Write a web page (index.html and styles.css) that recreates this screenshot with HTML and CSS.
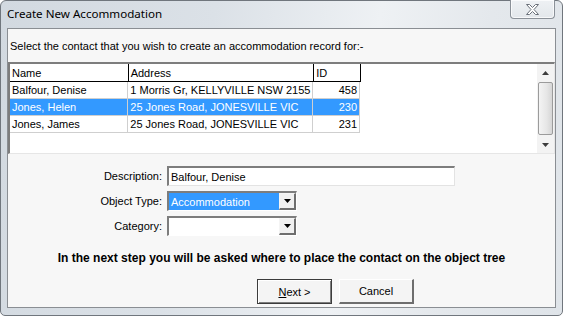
FILE: index.html
```html
<!DOCTYPE html>
<html>
<head>
<meta charset="utf-8">
<link rel="stylesheet" href="styles.css">
</head>
<body>
<div class="window">
  <div class="titlebar">
    <span class="title">Create New Accommodation</span>
    <div class="close">
      <svg width="13" height="11" viewBox="0 0 13 11"><polygon points="0.5,0.5 3.5,0.5 6.5,3.5 9.5,0.5 12.5,0.5 8,5.5 12.5,10.5 9.5,10.5 6.5,7.5 3.5,10.5 0.5,10.5 5,5.5" fill="#ffffff" stroke="#6a7079" stroke-width="1" stroke-linejoin="round"/></svg>
    </div>
  </div>
  <div class="client">
    <div class="prompt">Select the contact that you wish to create an accommodation record for:-</div>
    <div class="grid">
      <div class="table">
        <div class="row head">
          <div class="cell c1">Name</div>
          <div class="cell c2">Address</div>
          <div class="cell c3">ID</div>
        </div>
        <div class="row">
          <div class="cell c1">Balfour, Denise</div>
          <div class="cell c2">1 Morris Gr, KELLYVILLE NSW 2155</div>
          <div class="cell c3 num">458</div>
        </div>
        <div class="row sel">
          <div class="cell c1">Jones, Helen</div>
          <div class="cell c2">25 Jones Road, JONESVILLE VIC</div>
          <div class="cell c3 num">230</div>
        </div>
        <div class="row">
          <div class="cell c1">Jones, James</div>
          <div class="cell c2">25 Jones Road, JONESVILLE VIC</div>
          <div class="cell c3 num">231</div>
        </div>
      </div>
      <div class="vscroll">
        <div class="sarrow"><svg width="7" height="4" viewBox="0 0 7 4"><polygon points="3.5,0 7,4 0,4" fill="#3c3c3c"/></svg></div>
        <div class="thumb"></div>
        <div class="sarrow"><svg width="7" height="4" viewBox="0 0 7 4"><polygon points="0,0 7,0 3.5,4" fill="#3c3c3c"/></svg></div>
      </div>
    </div>
    <div class="form">
      <label class="lbl">Description:</label>
      <div class="textbox">Balfour, Denise</div>
      <label class="lbl">Object Type:</label>
      <div class="combo"><span class="value selected">Accommodation</span><span class="dbtn"><svg width="7" height="4" viewBox="0 0 7 4"><polygon points="0,0 7,0 3.5,4" fill="#000"/></svg></span></div>
      <label class="lbl">Category:</label>
      <div class="combo"><span class="value"></span><span class="dbtn"><svg width="7" height="4" viewBox="0 0 7 4"><polygon points="0,0 7,0 3.5,4" fill="#000"/></svg></span></div>
    </div>
    <div class="note">In the next step you will be asked where to place the contact on the object tree</div>
    <div class="buttons">
      <button class="btn default"><u>N</u>ext &gt;</button>
      <button class="btn">Cancel</button>
    </div>
  </div>
</div>
</body>
</html>
```
FILE: styles.css
```css
html, body {
  margin: 0;
  padding: 0;
  background: #ffffff;
}
.window {
  width: 563px;
  height: 316px;
  box-sizing: border-box;
  border: 1px solid #70767d;
  border-radius: 6px 6px 5px 5px;
  background: linear-gradient(100deg, #d2d9e0 0%, #dbe1e7 35%, #eef1f4 62%, #e4e8ec 80%, #dfe4e9 100%);
  display: flex;
  flex-direction: column;
  font-family: "Liberation Sans", Arial, sans-serif;
  font-size: 11px;
  color: #000;
}
.titlebar {
  height: 27px;
  display: flex;
  align-items: flex-start;
  padding-left: 6px;
}
.title {
  font-family: "Noto Sans", "Liberation Sans", sans-serif;
  font-size: 11.6px;
  color: #000;
  margin-top: 5px;
}
.close {
  margin-left: auto;
  margin-right: 7px;
  margin-top: -1px;
  width: 45px;
  height: 19px;
  box-sizing: border-box;
  border: 1px solid #8b9198;
  border-top: none;
  border-radius: 0 0 4px 4px;
  background: linear-gradient(#eef1f4, #e3e7eb);
  box-shadow: inset 0 0 0 1px rgba(255,255,255,0.7);
  display: flex;
  align-items: center;
  justify-content: center;
}
.close svg { margin-top: 1px; }
.client {
  flex: 1;
  margin: 0 6px 7px 6px;
  border: 1px solid #8a8e93;
  background: #f7f7f7;
  display: flex;
  flex-direction: column;
}
.prompt {
  height: 33px;
  display: flex;
  align-items: center;
  padding-left: 2px;
}
.grid {
  height: 92px;
  box-sizing: border-box;
  border-style: solid;
  border-width: 2px 1px 1px 2px;
  border-color: #7d7d7d #e6e6e6 #e6e6e6 #7d7d7d;
  background: #ffffff;
  display: flex;
}
.table {
  flex: 1;
}
.row {
  display: flex;
  height: 17px;
  box-sizing: border-box;
  border-bottom: 1px solid #cfcfcf;
  width: 350px;
}
.row.head {
  height: 18px;
  border-bottom: 1px solid #000;
  width: 351px;
}
.cell {
  box-sizing: border-box;
  border-right: 1px solid #cfcfcf;
  padding: 0 2px;
  display: flex;
  align-items: center;
  white-space: nowrap;
  overflow: hidden;
}
.head .cell { border-right-color: #000; }
.c1 { width: 119px; }
.c2 { width: 186px; }
.c3 { width: 47px; }
.num { justify-content: flex-end; }
.row.sel {
  background: #3399ff;
  color: #ffffff;
}
.vscroll {
  width: 17px;
  background: #f3f3f3;
  display: flex;
  flex-direction: column;
  align-items: center;
}
.sarrow {
  height: 17px;
  width: 17px;
  display: flex;
  align-items: center;
  justify-content: center;
}
.thumb {
  width: 15px;
  flex: 1;
  box-sizing: border-box;
  border: 1px solid #9b9b9b;
  border-radius: 2px;
  background: linear-gradient(90deg, #f4f4f4, #e6e6e6 60%, #d6d6d6);
  margin: 1px 0;
}
.form {
  display: grid;
  grid-template-columns: 154px auto;
  grid-auto-rows: 20px;
  row-gap: 5px;
  column-gap: 5px;
  margin-top: 12px;
  justify-items: start;
}
.lbl {
  justify-self: end;
  align-self: center;
}
.textbox {
  width: 288px;
  height: 20px;
  box-sizing: border-box;
  border-style: solid;
  border-width: 2px 1px 1px 2px;
  border-color: #7d7d7d #e3e3e3 #e3e3e3 #7d7d7d;
  background: #fff;
  padding-left: 2px;
  display: flex;
  align-items: center;
}
.combo {
  width: 130px;
  height: 20px;
  box-sizing: border-box;
  border-style: solid;
  border-width: 2px 1px 1px 2px;
  border-color: #7d7d7d #fff #fff #7d7d7d;
  background: #fff;
  display: flex;
}
.value {
  flex: 1;
  display: flex;
  align-items: center;
  padding-left: 2px;
}
.value.selected {
  background: #3399ff;
  color: #fff;
}
.dbtn {
  width: 17px;
  box-sizing: border-box;
  border-style: solid;
  border-width: 1px 2px 2px 1px;
  border-color: #f4f4f4 #6e6e6e #6e6e6e #f4f4f4;
  background: #f0f0f0;
  display: flex;
  align-items: center;
  justify-content: center;
}
.note {
  font-weight: bold;
  font-size: 12px;
  text-align: center;
  margin-top: 15px;
  line-height: 14px;
}
.buttons {
  display: flex;
  gap: 7px;
  padding-left: 249px;
  margin-top: 14px;
}
.btn {
  width: 75px;
  height: 25px;
  box-sizing: border-box;
  font-family: "Liberation Sans", Arial, sans-serif;
  font-size: 11px;
  color: #000;
  background: #f4f4f4;
  border-style: solid;
  border-width: 1px 2px 2px 1px;
  border-color: #ffffff #6e6e6e #6e6e6e #ffffff;
  padding: 0;
}
.btn.default {
  border: 1px solid #3c3c3c;
  box-shadow: inset 1px 1px 0 #ffffff, inset -1px -1px 0 #7d7d7d;
}
.btn u { text-decoration: underline; }
```
